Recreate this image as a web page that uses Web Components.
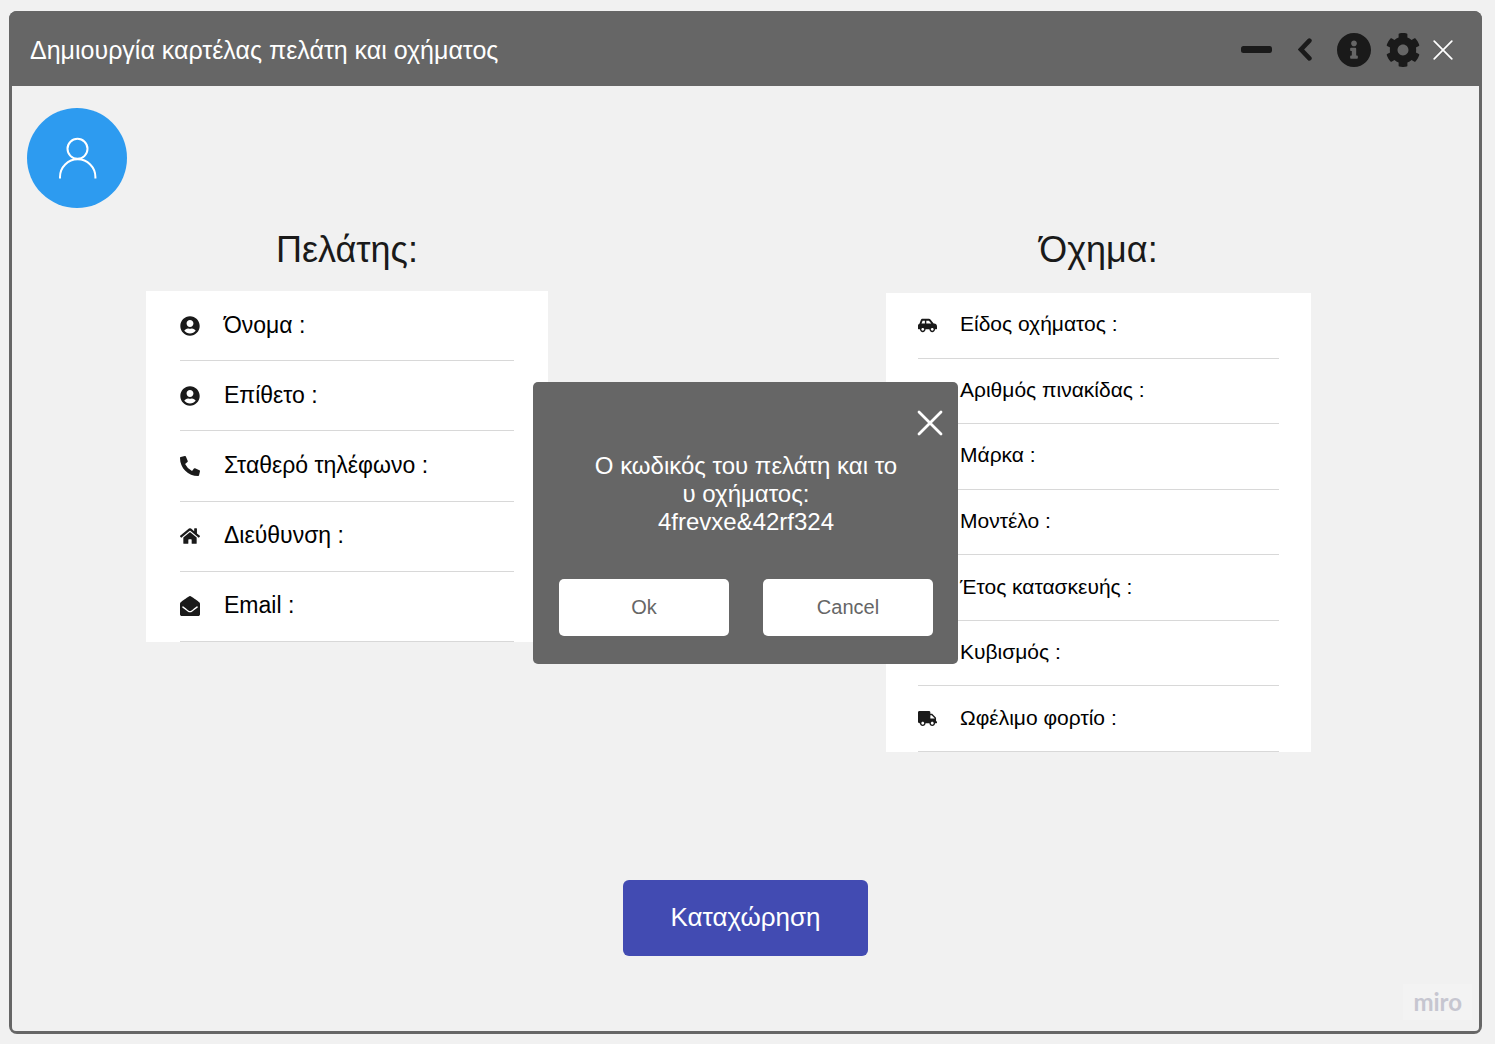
<!DOCTYPE html>
<html lang="el">
<head>
<meta charset="utf-8">
<title>Δημιουργία καρτέλας πελάτη και οχήματος</title>
<style>
  html { height: 100%; }
  body {
    margin: 0;
    min-height: 100%;
    box-sizing: border-box;
    padding: 11px 13px 10px 9px;
    display: flex;
    background: #f1f1f1;
    color: #1a1a1a;
    font-family: "Liberation Sans", Arial, sans-serif;
  }
</style>
</head>
<body>
<app-window></app-window>

<script>
const ICONS = {
  minus: ['0 0 31 7', '<rect width="31" height="7" rx="2.5"/>'],
  back: ['0 0 14 23', '<path d="M11.400 2.600L3 11.500L11.400 20.400" fill="none" stroke="currentColor" stroke-width="4.600" stroke-linecap="round" stroke-linejoin="miter"/>'],
  info: ['8 8 496 496', '<path d="M256 8C119.043 8 8 119.083 8 256c0 136.997 111.043 248 248 248s248-111.003 248-248C504 119.083 392.957 8 256 8zm0 110c23.196 0 42 18.804 42 42s-18.804 42-42 42-42-18.804-42-42 18.804-42 42-42zm56 254c0 6.627-5.373 12-12 12h-88c-6.627 0-12-5.373-12-12v-24c0-6.627 5.373-12 12-12h12v-64h-12c-6.627 0-12-5.373-12-12v-24c0-6.627 5.373-12 12-12h64c6.627 0 12 5.373 12 12v100h12c6.627 0 12 5.373 12 12v24z"/>'],
  gear: ['8 8 496 496', '<path d="M487.4 315.7l-42.6-24.6c4.3-23.2 4.3-47 0-70.2l42.6-24.6c4.9-2.8 7.1-8.6 5.5-14-11.1-35.6-30-67.8-54.7-94.6-3.8-4.1-10-5.1-14.8-2.3L380.8 110c-17.9-15.4-38.5-27.3-60.8-35.1V25.8c0-5.6-3.9-10.5-9.4-11.7-36.7-8.2-74.3-7.8-109.2 0-5.5 1.2-9.4 6.1-9.4 11.7V75c-22.2 7.9-42.8 19.8-60.8 35.1L88.7 85.5c-4.9-2.8-11-1.9-14.8 2.3-24.7 26.7-43.6 58.9-54.7 94.6-1.7 5.4.6 11.2 5.5 14L67.3 221c-4.3 23.2-4.3 47 0 70.2l-42.6 24.6c-4.9 2.8-7.1 8.6-5.5 14 11.1 35.6 30 67.8 54.7 94.6 3.8 4.1 10 5.1 14.8 2.3l42.6-24.6c17.9 15.4 38.5 27.3 60.8 35.1v49.2c0 5.6 3.9 10.5 9.4 11.7 36.7 8.2 74.3 7.8 109.2 0 5.5-1.2 9.4-6.1 9.4-11.7v-49.2c22.2-7.9 42.8-19.8 60.8-35.1l42.6 24.6c4.9 2.8 11 1.9 14.8-2.3 24.7-26.7 43.6-58.9 54.7-94.6 1.500-5.500-.7-11.300-5.600-14.100zM256 336c-44.100 0-80-35.900-80-80s35.900-80 80-80 80 35.900 80 80-35.900 80-80 80z"/>'],
  close: ['0 0 20 20', '<path d="M1.2 1.2L18.8 18.8M18.8 1.2L1.2 18.8" fill="none" stroke="currentColor" stroke-width="1.7" stroke-linecap="round"/>'],
  dismiss: ['0 0 26 26', '<path d="M2 2L24 24M24 2L2 24" fill="none" stroke="currentColor" stroke-width="2.8" stroke-linecap="round"/>'],
  user: ['0 0 496 512', '<path d="M248 8C111 8 0 119 0 256s111 248 248 248 248-111 248-248S385 8 248 8zm0 96c48.6 0 88 39.4 88 88s-39.4 88-88 88-88-39.4-88-88 39.4-88 88-88zm0 344c-58.7 0-111.3-26.6-146.5-68.2 18.8-35.4 55.6-59.8 98.5-59.8 2.4 0 4.8.4 7.1 1.1 13 4.2 26.6 6.9 40.9 6.9 14.3 0 28-2.7 40.9-6.9 2.3-.7 4.7-1.1 7.1-1.1 42.9 0 79.7 24.4 98.5 59.8C359.3 421.4 306.7 448 248 448z"/>'],
  phone: ['0 0 512 512', '<path d="M497.39 361.8l-112-48a24 24 0 0 0-28 6.9l-49.6 60.6A370.66 370.66 0 0 1 130.6 204.11l60.6-49.6a23.94 23.94 0 0 0 6.9-28l-48-112A24.16 24.16 0 0 0 122.6.61l-104 24A24 24 0 0 0 0 48c0 256.5 207.9 464 464 464a24 24 0 0 0 23.4-18.6l24-104a24.29 24.29 0 0 0-14.01-27.6z"/>'],
  home: ['0 0 576 512', '<path d="M280.37 148.26L96 300.11V464a16 16 0 0 0 16 16l112.06-.29a16 16 0 0 0 15.92-16V368a16 16 0 0 1 16-16h64a16 16 0 0 1 16 16v95.64a16 16 0 0 0 16 16.05L464 480a16 16 0 0 0 16-16V300L295.67 148.26a12.19 12.19 0 0 0-15.3 0zM571.6 251.47L488 182.56V44.05a12 12 0 0 0-12-12h-56a12 12 0 0 0-12 12v72.61L318.47 43a48 48 0 0 0-61 0L4.34 251.47a12 12 0 0 0-1.6 16.9l25.5 31A12 12 0 0 0 45.15 301l235.22-193.74a12.19 12.19 0 0 1 15.3 0L530.9 301a12 12 0 0 0 16.9-1.6l25.5-31a12 12 0 0 0-1.7-16.93z"/>'],
  mail: ['0 0 512 512', '<path d="M512 464c0 26.51-21.49 48-48 48H48c-26.51 0-48-21.49-48-48V200.724a48 48 0 0 1 18.387-37.776c24.913-19.529 45.501-35.365 164.2-121.511C199.412 29.17 232.797-.347 256 .003c23.198-.354 56.596 29.172 73.413 41.433 118.687 86.137 139.303 101.995 164.2 121.512A48 48 0 0 1 512 200.724V464zm-65.666-196.605c-2.563-3.728-7.7-4.595-11.339-1.907-22.845 16.873-55.462 40.705-105.582 77.079-16.825 12.266-50.21 41.781-73.413 41.43-23.211.344-56.559-29.143-73.413-41.43-50.114-36.37-82.734-60.204-105.582-77.079-3.639-2.688-8.776-1.821-11.339 1.907l-9.072 13.196a7.998 7.998 0 0 0 1.839 10.967c22.887 16.899 55.454 40.69 105.303 76.868 20.274 14.781 56.524 47.813 92.264 47.573 35.724.242 71.961-32.771 92.263-47.573 49.85-36.179 82.418-59.97 105.303-76.868a7.998 7.998 0 0 0 1.839-10.967l-9.071-13.196z"/>'],
  car: ['0 0 640 512', '<path d="M544 192h-16L419.22 56.02A64.025 64.025 0 0 0 369.24 32H155.33c-26.17 0-49.7 15.93-59.42 40.23L48 194.26C20.44 201.4 0 226.21 0 256v112c0 8.84 7.16 16 16 16h48c0 53.02 42.98 96 96 96s96-42.98 96-96h128c0 53.02 42.98 96 96 96s96-42.98 96-96h48c8.84 0 16-7.16 16-16v-80c0-53.02-42.98-96-96-96zM160 432c-26.47 0-48-21.53-48-48s21.53-48 48-48 48 21.53 48 48-21.53 48-48 48zm72-240H116.93l38.4-96H232v96zm48 0V96h89.24l76.8 96H280zm200 240c-26.47 0-48-21.53-48-48s21.53-48 48-48 48 21.53 48 48-21.53 48-48 48z"/>'],
  truck: ['0 0 640 512', '<path d="M624 352h-16V243.9c0-12.7-5.1-24.9-14.1-33.9L494 110.1c-9-9-21.2-14.1-33.9-14.1H416V48c0-26.5-21.5-48-48-48H48C21.5 0 0 21.5 0 48v320c0 26.5 21.5 48 48 48h16c0 53 43 96 96 96s96-43 96-96h128c0 53 43 96 96 96s96-43 96-96h48c8.8 0 16-7.2 16-16v-32c0-8.8-7.2-16-16-16zM160 464c-26.5 0-48-21.5-48-48s21.5-48 48-48 48 21.5 48 48-21.5 48-48 48zm320 0c-26.5 0-48-21.5-48-48s21.5-48 48-48 48 21.5 48 48-21.5 48-48 48zm80-208H416V144h44.1l99.9 99.9V256z"/>'],
  avatar: ['0 0 100 100', '<g fill="none" stroke="currentColor" stroke-width="2"><circle cx="50.5" cy="40.8" r="10"/><path d="M33 70.500v-1.500a17.700 17.700 0 0 1 35.400 0v1.500"/></g>']
};

/* Shared base: renders a template string into an open shadow root. */
class Base extends HTMLElement {
  connectedCallback() {
    if (this.shadowRoot) return;
    const t = document.createElement('template');
    t.innerHTML = this.render();
    this.attachShadow({ mode: 'open' }).append(t.content.cloneNode(true));
  }
}

customElements.define('ui-icon', class extends Base {
  render() {
    const icon = ICONS[this.getAttribute('name')];
    return `<style>:host{display:block;flex:none}svg{display:block;width:100%;height:100%;fill:currentColor}</style>` +
      (icon ? `<svg viewBox="${icon[0]}" aria-hidden="true">${icon[1]}</svg>` : '');
  }
});

customElements.define('title-bar', class extends Base {
  render() {
    return `<style>
      :host { display: flex; align-items: center; justify-content: space-between; height: 75px; box-sizing: border-box; padding: 2px 29px 0 21px; background: #666; }
      h1 { margin: 0; font-size: 25px; line-height: 30px; font-weight: 400; color: #fff; }
      nav { display: flex; align-items: center; }
      button { border: 0; padding: 0; background: none; color: #1a1a1a; cursor: pointer; }
      .minus { width: 31px; height: 7px; margin-right: 26px; }
      .back { width: 14px; height: 23px; margin-right: 25px; }
      .info { width: 34px; height: 34px; margin-right: 15px; }
      .gear { width: 34px; height: 34px; margin-right: 13px; }
      .close { width: 20px; height: 20px; color: #fff; }
    </style>
    <h1><slot></slot></h1>
    <nav>
      <button aria-label="Ελαχιστοποίηση"><ui-icon class="minus" name="minus"></ui-icon></button>
      <button aria-label="Πίσω"><ui-icon class="back" name="back"></ui-icon></button>
      <button aria-label="Πληροφορίες"><ui-icon class="info" name="info"></ui-icon></button>
      <button aria-label="Ρυθμίσεις"><ui-icon class="gear" name="gear"></ui-icon></button>
      <button aria-label="Κλείσιμο"><ui-icon class="close" name="close"></ui-icon></button>
    </nav>`;
  }
});

customElements.define('user-avatar', class extends Base {
  render() {
    return `<style>
      :host { display: block; width: 100px; height: 100px; border-radius: 50%; background: #2d9bf0; color: #fff; }
    </style><ui-icon name="avatar"></ui-icon>`;
  }
});

customElements.define('field-row', class extends Base {
  render() {
    return `<style>
      :host { display: flex; flex: 1; align-items: center; box-sizing: border-box; border-bottom: 1px solid #d8d8d8; color: #000; }
      ui-icon { width: var(--icon); height: var(--icon); margin-right: var(--gap); color: #1a1a1a; }
      label { padding-bottom: 2px; font-size: var(--size); line-height: 28px; white-space: nowrap; }
      input { flex: 1; min-width: 0; border: 0; padding: 0 0 0 8px; outline: 0; background: none; font: inherit; font-size: var(--size); color: inherit; }
    </style>
    <ui-icon name="${this.getAttribute('icon') || ''}"></ui-icon>
    <label for="value"><slot></slot></label>
    <input id="value" type="text">`;
  }
});

customElements.define('field-panel', class extends Base {
  render() {
    return `<style>
      :host { display: flex; flex-direction: column; min-width: 0; }
      h2 { margin: 0; font-size: 36px; line-height: 42px; font-weight: 400; text-align: center; }
      .card { display: flex; flex-direction: column; box-sizing: border-box; background: #fff; }
    </style>
    <h2>${this.getAttribute('heading')}</h2>
    <div class="card" part="card"><slot></slot></div>`;
  }
});

customElements.define('code-dialog', class extends Base {
  render() {
    return `<style>
      :host { display: flex; flex-direction: column; width: 425px; box-sizing: border-box; padding: 28px 25px 28px 26px; border-radius: 5px; background: #666; color: #fff; }
      .close { align-self: flex-end; margin-right: -10px; border: 0; padding: 0; background: none; color: #fff; cursor: pointer; }
      .close ui-icon { width: 26px; height: 26px; }
      p { margin: 16px 0 43px; font-size: 24px; line-height: 28px; text-align: center; }
      .actions { display: flex; gap: 34px; }
      .actions button { flex: 1; height: 57px; border: 0; border-radius: 5px; background: #fff; color: #666; font-family: inherit; font-size: 20px; cursor: pointer; }
    </style>
    <button class="close" aria-label="Κλείσιμο"><ui-icon name="dismiss"></ui-icon></button>
    <p><slot></slot></p>
    <div class="actions"><button>Ok</button><button>Cancel</button></div>`;
  }
});

customElements.define('app-window', class extends Base {
  render() {
    return `<style>
      :host { position: relative; flex: 1; display: flex; flex-direction: column; box-sizing: border-box; border-radius: 8px; overflow: hidden; background: #666; }
      main { flex: 1; display: flex; flex-direction: column; margin: 0 3px 3px; padding-top: 22px; border-radius: 0 0 4px 4px; background: #f1f1f1; }
      user-avatar { margin-left: 15px; }
      form { display: flex; flex-direction: column; margin-top: 21px; }
      .panels { display: grid; grid-template-columns: minmax(0, 402fr) minmax(0, 338fr) minmax(0, 425fr); align-items: start; padding: 0 168px 0 134px; }
      .customer { --size: 23px; --icon: 20px; --gap: 24px; }
      .customer::part(card) { margin-top: 20px; padding: 0 34px; height: 351px; }
      .vehicle { grid-column: 3; --size: 21px; --icon: 19px; --gap: 23px; }
      .vehicle::part(card) { margin-top: 22px; padding: 0 32px; height: 459px; }
      .submit { align-self: center; width: 245px; height: 76px; margin-top: 128px; border: 0; border-radius: 6px; padding: 0 0 2px; background: #424bb2; color: #fff; font-family: inherit; font-size: 26px; cursor: pointer; }
      footer { align-self: flex-end; margin: auto 7px 11px 0; padding: 4px 10px; background: #f3f3f3; color: #c6c6d0; font: 700 24px/28px Lato, sans-serif; }
      .overlay { position: absolute; inset: 0; display: grid; place-items: center; pointer-events: none; }
      code-dialog { pointer-events: auto; }
    </style>
    <title-bar>Δημιουργία καρτέλας πελάτη και οχήματος</title-bar>
    <main>
      <user-avatar></user-avatar>
      <form>
        <div class="panels">
          <field-panel class="customer" heading="Πελάτης:">
            <field-row icon="user">Όνομα :</field-row>
            <field-row icon="user">Επίθετο :</field-row>
            <field-row icon="phone">Σταθερό τηλέφωνο :</field-row>
            <field-row icon="home">Διεύθυνση :</field-row>
            <field-row icon="mail">Email :</field-row>
          </field-panel>
          <field-panel class="vehicle" heading="Όχημα:">
            <field-row icon="car">Είδος οχήματος :</field-row>
            <field-row>Αριθμός πινακίδας :</field-row>
            <field-row>Μάρκα :</field-row>
            <field-row>Μοντέλο :</field-row>
            <field-row>Έτος κατασκευής :</field-row>
            <field-row>Κυβισμός :</field-row>
            <field-row icon="truck">Ωφέλιμο φορτίο :</field-row>
          </field-panel>
        </div>
        <button class="submit" type="button">Καταχώρηση</button>
      </form>
      <footer>miro</footer>
    </main>
    <div class="overlay">
      <code-dialog role="dialog">Ο κωδικός του πελάτη και το<br>υ οχήματος:<br>4frevxe&amp;42rf324</code-dialog>
    </div>`;
  }
});
</script>
</body>
</html>
